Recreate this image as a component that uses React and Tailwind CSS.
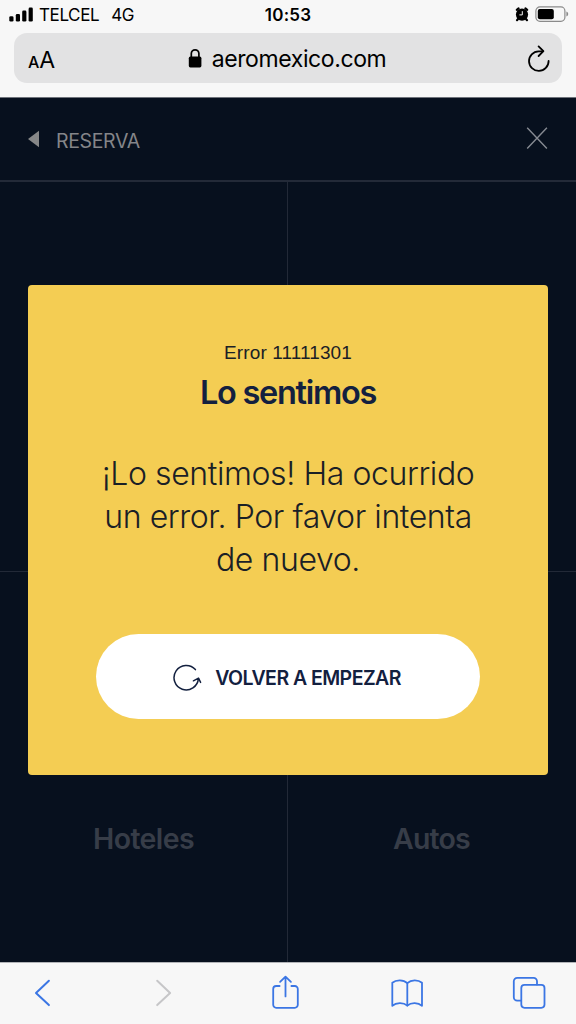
/**
 * App.jsx
 * Mobile Safari view of the booking page with the error dialog open.
 */
import React from "react";

/* ---------- Status bar icons ---------- */

function SignalIcon() {
  return (
    <svg width="25" height="16" viewBox="0 0 25 16" fill="#000">
      <rect x="0.3" y="9.3" width="4.2" height="5.2" rx="1.3" />
      <rect x="6.8" y="6.9" width="4.2" height="7.6" rx="1.3" />
      <rect x="13.2" y="3.6" width="4.2" height="10.9" rx="1.3" />
      <rect x="19.6" y="0.6" width="4.2" height="13.9" rx="1.3" />
    </svg>
  );
}

function AlarmIcon() {
  return (
    <svg width="14" height="16" viewBox="0 0 14 16">
      <circle cx="7" cy="8.6" r="6.1" fill="#000" />
      <path d="M1.8 3.8 3.6 2.4M12.2 3.8 10.4 2.4M3 13 2 14.2M11 13l1 1.2" stroke="#000" strokeWidth="2.2" strokeLinecap="round" />
      <path d="M7.3 5.2v3.7H4.4" stroke="#f7f7f7" strokeWidth="1" fill="none" />
    </svg>
  );
}

function BatteryIcon() {
  return (
    <svg width="34" height="16" viewBox="0 0 34 16">
      <rect x="0.9" y="0.9" width="29" height="14.4" rx="4" fill="none" stroke="#8b8b8b" strokeWidth="1.2" />
      <rect x="2.8" y="2.9" width="16" height="10.4" rx="2" fill="#000" />
      <path d="M31.4 5.6c2.4.9 2.4 4.1 0 5z" fill="#8b8b8b" />
    </svg>
  );
}

/* ---------- Address bar icons ---------- */

function LockIcon() {
  return (
    <svg width="14" height="20" viewBox="0 0 14 20">
      <rect x="0.8" y="8.6" width="12.6" height="10.8" rx="1.6" fill="#000" />
      <path d="M3.3 9.2V5.6a3.8 3.8 0 0 1 7.6 0V9.2" stroke="#000" strokeWidth="1.7" fill="none" />
    </svg>
  );
}

function ReloadIcon() {
  return (
    <svg width="24" height="28" viewBox="0 0 24 28" fill="none" stroke="#000" strokeWidth="1.8" strokeLinecap="round" strokeLinejoin="round">
      <path d="M16.8 7.3H12.6A9.8 9.8 0 1 0 22.6 17" />
      <path d="M12.6 2.4 17.4 7.2 12.6 12" />
    </svg>
  );
}

/* ---------- Page icons ---------- */

function CloseIcon() {
  return (
    <svg width="24" height="24" viewBox="0 0 24 24">
      <path d="M2.2 0.8 21.9 21.6M21.9 0.8 2.2 21.6" stroke="#868a92" strokeWidth="1.4" />
    </svg>
  );
}

function RestartIcon() {
  return (
    <svg width="30" height="28" viewBox="0 0 30 28" fill="none" stroke="#13203f" strokeWidth="1.5" strokeLinecap="round" strokeLinejoin="round">
      <path d="M23.4 6.6A12.2 12.2 0 1 0 26.4 15.6" />
      <path d="M21.4 17.8 26.5 15.2 28.6 19.4" />
    </svg>
  );
}

/* ---------- Toolbar ---------- */

function ToolbarIcon({ name }) {
  const stroke = name === "forward" ? "#c6c6c8" : "#3b76e4";
  const shapes = {
    back: <path d="M21.9 7.8 9 20 21.9 32.1" strokeWidth="2" />,
    forward: <path d="M9.2 7.8 22.1 20 9.2 32.1" strokeWidth="2" />,
    share: (
      <>
        <path d="M10.6 13H7.2a3 3 0 0 0-3 3v15.8a3 3 0 0 0 3 3h18.6a3 3 0 0 0 3-3V16a3 3 0 0 0-3-3h-3.4" />
        <path d="M16.5 23.4V3.8M11.1 8.9l5.4-5.3 5.4 5.3" />
      </>
    ),
    book: (
      <>
        <path d="M17.3 32.6c-3.9-3.4-11.2-3.2-15 .2V9.8c3.8-3.2 11.1-3.3 15 .3 3.9-3.6 10.9-3.5 14.7-.3v23c-3.8-3.4-10.8-3.6-14.7-.2z" />
        <path d="M17.3 10.1v22.5" />
      </>
    ),
    tabs: (
      <>
        <path d="M9.8 27.6H6.2a3.4 3.4 0 0 1-3.4-3.4V8.2a3.4 3.4 0 0 1 3.4-3.4h16.4A3.4 3.4 0 0 1 26 8.2v3.3" />
        <rect x="10.3" y="11.9" width="23.2" height="22.9" rx="3.2" />
      </>
    ),
  };
  return (
    <svg width="38" height="38" viewBox="0 0 38 38" fill="none" stroke={stroke} strokeWidth="1.8" strokeLinecap="round" strokeLinejoin="round">
      {shapes[name]}
    </svg>
  );
}

function BrowserTop() {
  return (
    <div className="h-[97px] bg-[#f7f7f7] text-black">
      <div className="grid h-[33px] grid-cols-3 items-start pt-1.5">
        <div className="flex items-center pl-[9px] text-[17px] leading-[18px]">
          <SignalIcon />
          <span className="ml-[5px] tracking-[-0.4px]">TELCEL</span>
          <span className="ml-3 tracking-[-0.5px]">4G</span>
        </div>
        <div className="text-center text-[17px] leading-[18px] font-semibold tracking-[0.2px]">10:53</div>
        <div className="flex justify-end gap-[6px] pr-[7px]">
          <AlarmIcon />
          <BatteryIcon />
        </div>
      </div>
      <div className="mx-3.5 flex h-[50px] items-center justify-between rounded-[13px] bg-[#e2e2e3] pr-3 pl-[14px]">
        <div className="flex w-10 items-baseline pt-1">
          <span className="text-[16px] leading-none font-medium">A</span>
          <span className="text-[23px] leading-none">A</span>
        </div>
        <div className="flex items-center gap-[10px] pr-1">
          <LockIcon />
          <span className="pt-0.5 text-[23px] leading-7 tracking-[-0.4px]">aeromexico.com</span>
        </div>
        <div className="flex w-10 justify-end">
          <ReloadIcon />
        </div>
      </div>
    </div>
  );
}

function BrowserToolbar() {
  return (
    <div className="flex h-[62px] items-start justify-between border-t border-[#b2b4b8] bg-[#f7f7f7] px-[27px] pt-[10px]">
      {["back", "forward", "share", "book", "tabs"].map((name) => (
        <button key={name} type="button" className="block">
          <ToolbarIcon name={name} />
        </button>
      ))}
    </div>
  );
}

function ErrorDialog() {
  return (
    <div className="absolute top-[187px] left-7 flex h-[490px] w-[520px] flex-col items-center rounded-[4px] bg-[#f4cd53] pt-[55px] text-[#13203f]">
      <p className="font-['Liberation_Sans',sans-serif] text-[19px] leading-[26px] tracking-[0.1px] text-[#1a2026]">
        Error 11111301
      </p>
      <h1 className="mt-[9px] text-[32.5px] leading-[36px] font-semibold tracking-[-1.3px]">Lo sentimos</h1>
      <p className="mt-[41px] text-center text-[32px] leading-[43px] font-light tracking-[-0.4px] whitespace-nowrap text-[#1a2026]">
        ¡Lo sentimos! Ha ocurrido
        <br />
        un error. Por favor intenta
        <br />
        de nuevo.
      </p>
      <button
        type="button"
        className="mt-[53px] flex h-[85px] w-96 items-center justify-center gap-[13px] rounded-full bg-white pr-[3px]"
      >
        <RestartIcon />
        <span className="pt-0.5 text-[19.5px] leading-6 font-semibold tracking-[-0.55px]">VOLVER A EMPEZAR</span>
      </button>
    </div>
  );
}

export default function App() {
  return (
    <div className="flex h-[1024px] w-[576px] flex-col overflow-hidden bg-[#07101e] font-['Inter','Liberation_Sans',sans-serif]">
      <BrowserTop />

      <main className="relative flex h-[865px] flex-col border-t border-[#6f737b]">
        <header className="flex h-[84px] items-center border-b-2 border-[#232a38] pr-[27px] pl-7">
          <svg width="12" height="18" viewBox="0 0 12 18">
            <path d="M0 9 11 .8v16.4z" fill="#868788" />
          </svg>
          <span className="mt-[5px] ml-4 flex-1 text-[19.5px] tracking-[-0.35px] text-[#848589]">RESERVA</span>
          <CloseIcon />
        </header>

        {/* Service tiles behind the dialog */}
        <div className="grid flex-1 grid-cols-[287px_1fr] grid-rows-[390px_1fr]">
          <div className="border-b border-[#222937]" />
          <div className="border-b border-l border-[#222937]" />
          <div className="pt-[249px] text-center text-[28.5px] leading-9 font-semibold tracking-[-0.6px] text-[#373d48]">
            Hoteles
          </div>
          <div className="border-l border-[#222937] pt-[249px] pr-px text-center text-[28.5px] leading-9 font-semibold tracking-[-0.8px] text-[#373d48]">
            Autos
          </div>
        </div>

        <ErrorDialog />
      </main>

      <BrowserToolbar />
    </div>
  );
}
